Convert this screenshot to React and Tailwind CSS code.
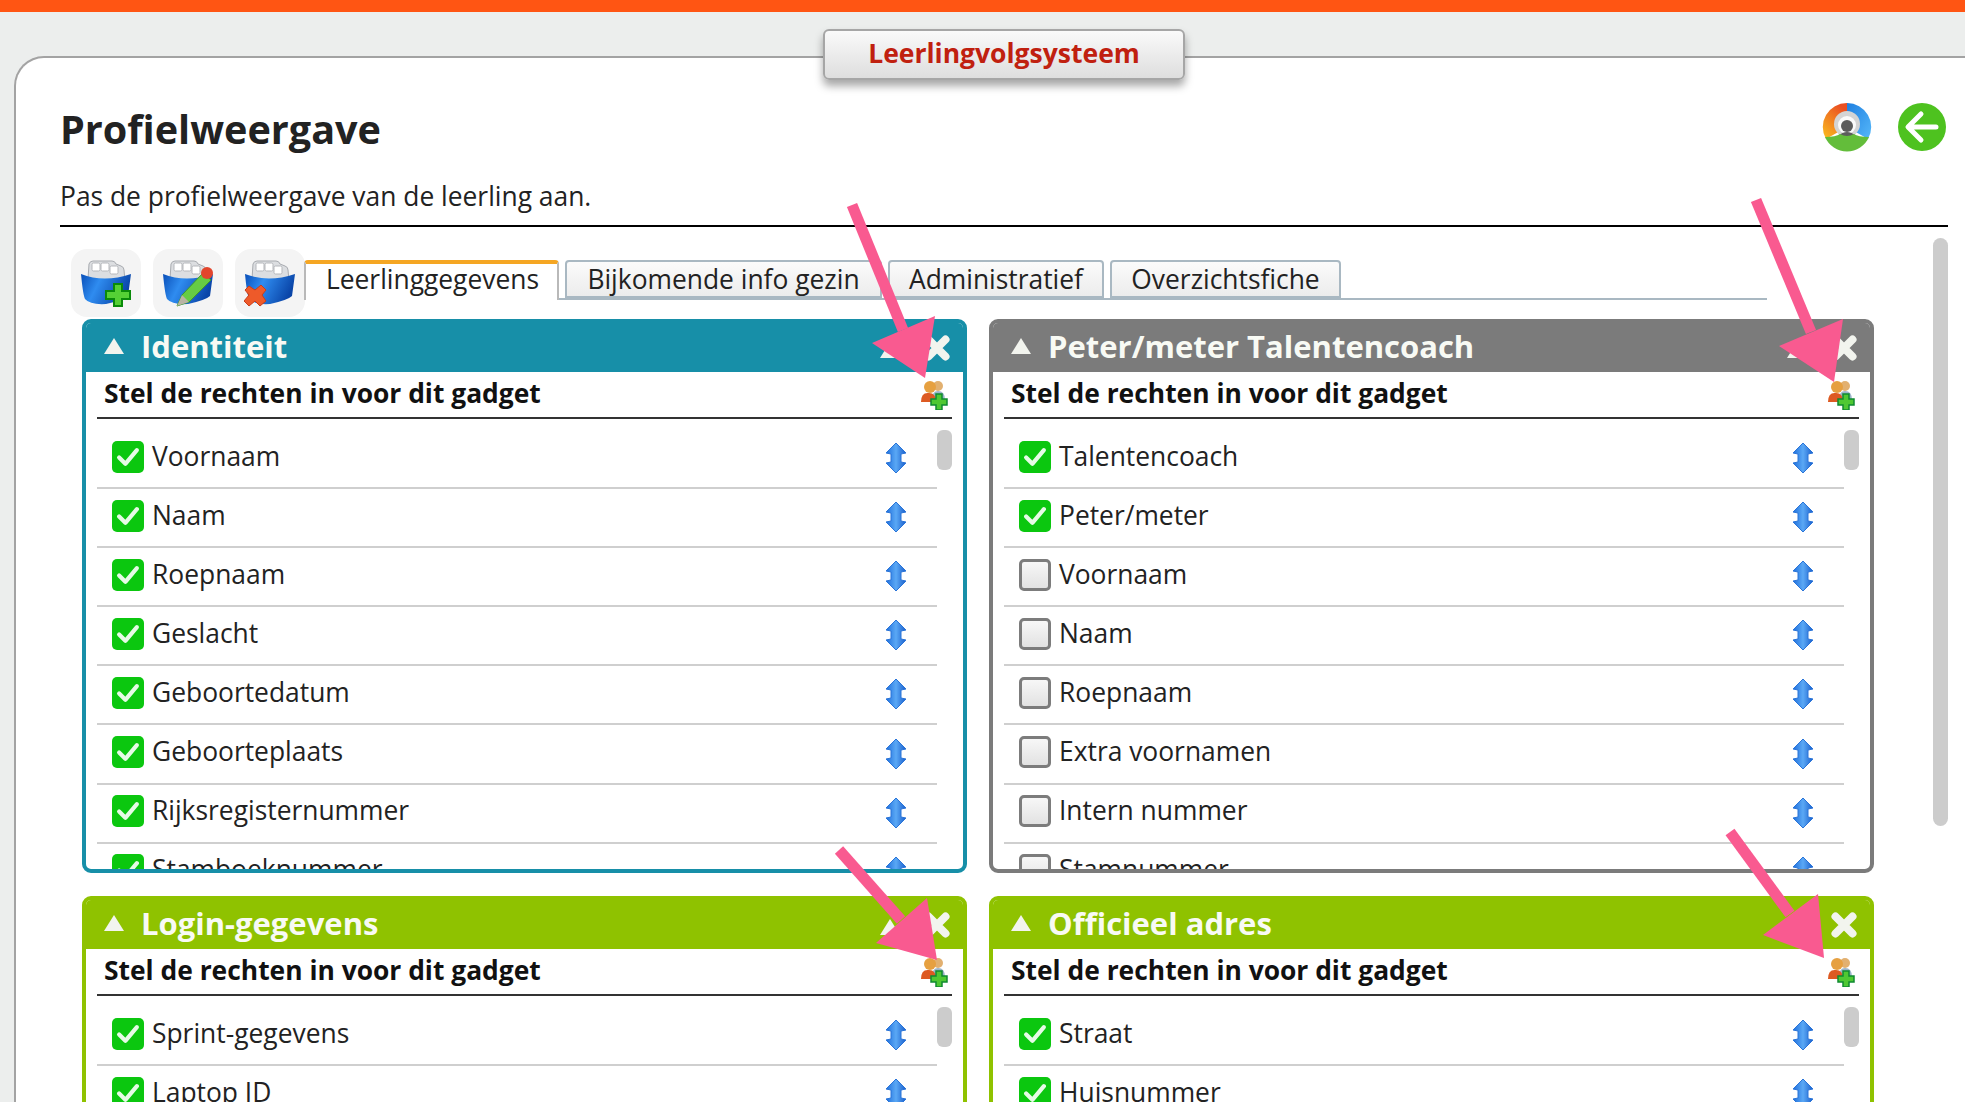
import React from "react";

const panels = [
  {
    title: "Identiteit",
    head: "bg-[#178fa8]",
    border: "border-[#178fa8]",
    rows: [
      ["Voornaam", true],
      ["Naam", true],
      ["Roepnaam", true],
      ["Geslacht", true],
      ["Geboortedatum", true],
      ["Geboorteplaats", true],
      ["Rijksregisternummer", true],
      ["Stamboeknummer", true],
    ],
  },
  {
    title: "Peter/meter Talentencoach",
    head: "bg-[#7b7b7b]",
    border: "border-[#7b7b7b]",
    rows: [
      ["Talentencoach", true],
      ["Peter/meter", true],
      ["Voornaam", false],
      ["Naam", false],
      ["Roepnaam", false],
      ["Extra voornamen", false],
      ["Intern nummer", false],
      ["Stamnummer", false],
    ],
  },
  {
    title: "Login-gegevens",
    head: "bg-[#8fc200]",
    border: "border-[#8fc200]",
    rows: [
      ["Sprint-gegevens", true],
      ["Laptop ID", true],
    ],
  },
  {
    title: "Officieel adres",
    head: "bg-[#8fc200]",
    border: "border-[#8fc200]",
    rows: [
      ["Straat", true],
      ["Huisnummer", true],
    ],
  },
];

function BinIcon({ kind }) {
  return (
    <svg width="52" height="48" viewBox="0 0 52 48">
      <defs>
        <linearGradient id="binBlue" x1="0" y1="0" x2="1" y2="0.3">
          <stop offset="0" stopColor="#0a4fb8" />
          <stop offset="0.4" stopColor="#2f8cf0" />
          <stop offset="1" stopColor="#0a45a8" />
        </linearGradient>
      </defs>
      <path d="M8 20 L9 5 Q10 2 13 2 L32 2 Q35 2 36 5 L41 7 Q44 8 44 11 L45 22 Z" fill="#dcdee1" stroke="#a8abb0" strokeWidth="1" />
      <rect x="12" y="4" width="8" height="8" rx="1.5" fill="#fff" stroke="#b5b7bb" />
      <rect x="21" y="4" width="8" height="8" rx="1.5" fill="#fff" stroke="#b5b7bb" />
      <rect x="30" y="7" width="8" height="8" rx="1.5" fill="#fff" stroke="#b5b7bb" />
      <path d="M1 15 Q24 24 51 15 L48 37 Q44 41 26 45 Q10 46 5 40 Q3 36 1 15 Z" fill="url(#binBlue)" />
      {kind === "add" && (
        <path d="M34 25 h8 v7 h8 v8 h-8 v7 h-8 v-7 h-8 v-8 h8 Z" fill="#55d035" stroke="#0a8a0a" strokeWidth="2" />
      )}
      {kind === "edit" && (
        <>
          <path d="M15 47 L20 36 L41 14 L49 21 L27 43 Z" fill="#66cc44" stroke="#3f9a2a" strokeWidth="1" />
          <path d="M15 47 L20 36 L27 43 Z" fill="#b9b4a4" />
          <circle cx="45" cy="14" r="6" fill="#e2452c" />
        </>
      )}
      {kind === "del" && (
        <path d="M5 27 L11 31 L17 26 L22 31 L18 36 L22 42 L16 47 L11 42 L5 47 L0 42 L5 36 L1 31 Z" fill="#ee5a2a" stroke="#c93d18" strokeWidth="1" />
      )}
    </svg>
  );
}

function ProfileIcon() {
  return (
    <svg width="50" height="50" viewBox="0 0 50 50">
      <defs>
        <linearGradient id="ringLeft" x1="0" y1="1" x2="0.6" y2="0">
          <stop offset="0" stopColor="#fbc01e" />
          <stop offset="1" stopColor="#ea4f22" />
        </linearGradient>
        <linearGradient id="ringRight" x1="0" y1="0" x2="1" y2="1">
          <stop offset="0" stopColor="#1f7fe0" />
          <stop offset="1" stopColor="#56b8fa" />
        </linearGradient>
      </defs>
      <path d="M25 25 L25 1 A24 24 0 0 0 4 37 Z" fill="url(#ringLeft)" />
      <path d="M25 25 L25 1 A24 24 0 0 1 46 37 Z" fill="url(#ringRight)" />
      <circle cx="25" cy="22" r="13" fill="#d4d4d4" />
      <circle cx="25" cy="23" r="9" fill="#fafafa" />
      <circle cx="25" cy="24" r="6" fill="#5c5c5c" />
      <path d="M16 34 Q25 26 34 34 Z" fill="#5c5c5c" />
      <path d="M3 35 Q14 35 18 32 Q25 36 32 32 Q36 35 47 35 A24 24 0 0 1 3 35 Z" fill="#63bd3a" />
    </svg>
  );
}

function BackIcon() {
  return (
    <svg width="48" height="48" viewBox="0 0 48 48">
      <circle cx="24" cy="24" r="24" fill="#4ec21f" />
      <path d="M38 24 H12 M23 11 L10 24 L23 37" fill="none" stroke="#fff" strokeWidth="5" strokeLinecap="round" strokeLinejoin="round" />
    </svg>
  );
}

function SortIcon() {
  return (
    <svg width="22" height="30" viewBox="0 0 22 30" className="shrink-0 mt-[3px]">
      <defs>
        <linearGradient id="sortBlue" x1="0" y1="0" x2="1" y2="0">
          <stop offset="0" stopColor="#1f6fdc" />
          <stop offset="0.5" stopColor="#5aa8f5" />
          <stop offset="1" stopColor="#1a5fcc" />
        </linearGradient>
      </defs>
      <path d="M11 0 L21 10 L16 11 L16 19 L21 20 L11 30 L1 20 L6 19 L6 11 L1 10 Z" fill="url(#sortBlue)" strokeLinejoin="round" stroke="#2a74d8" strokeWidth="1" />
    </svg>
  );
}

function UsersAddIcon() {
  return (
    <svg width="28" height="30" viewBox="0 0 28 30">
      <circle cx="18" cy="6" r="5" fill="#e2b070" />
      <path d="M12 20 Q12 11 18 11 Q25 11 25 20 Z" fill="#9ab4c8" />
      <circle cx="10" cy="7" r="6" fill="#e6a040" />
      <path d="M1 22 Q1 12 9 13 Q16 13 16 22 Z" fill="#dd5a22" />
      <path d="M16 14 h6 v5 h5 v6 h-5 v5 h-6 v-5 h-5 v-6 h5 Z" fill="#4fc832" stroke="#0f8a30" strokeWidth="1.5" />
    </svg>
  );
}

function Triangle() {
  return (
    <svg width="20" height="16" viewBox="0 0 20 16" className="shrink-0">
      <path d="M10 0 L20 16 L0 16 Z" fill="#f2f4ee" />
    </svg>
  );
}

function CloseIcon() {
  return (
    <svg width="26" height="26" viewBox="0 0 26 26" className="shrink-0">
      <path d="M4.5 4.5 L21.5 21.5 M21.5 4.5 L4.5 21.5" stroke="#f2f4ee" strokeWidth="8" strokeLinecap="round" />
    </svg>
  );
}

function Checkbox({ checked }) {
  if (!checked) {
    return (
      <div className="w-[32px] h-[32px] shrink-0 rounded-[5px] border-[3px] border-[#7c7c7c] bg-gradient-to-b from-[#f7f7f7] to-[#e2e2e2]" />
    );
  }
  return (
    <div className="w-[32px] h-[32px] shrink-0 rounded-[5px] bg-[#0bc70f] flex items-center justify-center">
      <svg width="24" height="22" viewBox="0 0 23 21">
        <path d="M3 11 L9 17 L20 4" fill="none" stroke="#e6fbe6" strokeWidth="4" strokeLinecap="round" strokeLinejoin="round" />
      </svg>
    </div>
  );
}

function Panel({ title, head, border, rows }) {
  return (
    <div className={"h-[554px] rounded-[9px] border-4 bg-white flex flex-col overflow-hidden " + border}>
      <div className={"h-[49px] shrink-0 flex items-center pl-[18px] pr-[13px] " + head}>
        <div className="mt-[-4px]">
          <Triangle />
        </div>
        <span className="ml-[17px] mt-[-3px] text-[31px] leading-none font-bold text-[#f8faf4]">{title}</span>
        <div className="ml-auto mr-[24px] mt-[5px]">
          <Triangle />
        </div>
        <CloseIcon />
      </div>
      <div className="h-[47px] shrink-0 mx-[11px] pl-[7px] pr-[4px] border-b-2 border-[#333] flex items-center justify-between">
        <span className="mt-[-2px] text-[26.4px] font-bold text-[#111]">Stel de rechten in voor dit gadget</span>
        <UsersAddIcon />
      </div>
      <div className="flex-1 min-h-0 flex mx-[11px] pt-[11px]">
        <div className="flex-1 min-w-0 overflow-hidden">
          {rows.map(([label, checked]) => (
            <div key={label} className="h-[59.1px] pl-[15px] pr-[30px] pb-[4px] border-b-2 border-[#cfcfcf] flex items-center">
              <Checkbox checked={checked} />
              <span className="ml-[8px] text-[26.4px] text-[#222]">{label}</span>
              <div className="ml-auto">
                <SortIcon />
              </div>
            </div>
          ))}
        </div>
        <div className="w-[15px] h-[40px] shrink-0 rounded-md bg-[#cccccc]" />
      </div>
    </div>
  );
}

function Tab({ label, active, className }) {
  return (
    <div
      className={
        "flex items-center justify-center text-[26.4px] text-[#222] rounded-t-[4px] " +
        (active
          ? "h-[40px] -mb-[2px] pb-[4px] pl-[2px] bg-white border-t-[4px] border-t-[#f5a623] border-x-2 border-x-[#b9b9b9] "
          : "h-[38px] pt-[2px] bg-gradient-to-b from-[#fbfbfb] to-[#ececec] border-2 border-[#a9b8c2] ") +
        className
      }
    >
      {label}
    </div>
  );
}

export default function App() {
  return (
    <div className="relative h-[1102px] overflow-hidden bg-[#eceeed] font-['Open_Sans',sans-serif]">
      <div className="h-3 bg-[#ff5513]" />

      <div className="mt-[44px] ml-[14px] h-[1100px] rounded-tl-[30px] border-t-2 border-l-2 border-[#a3a3a3] bg-white pl-[44px] pr-[17px] pt-[43px]">
        <div className="flex items-center justify-between pr-[2px] h-[56px]">
          <h1 className="mt-[1px] text-[39.6px] font-bold text-[#222]">Profielweergave</h1>
          <div className="flex items-center gap-[26px] mt-[-4px]">
            <ProfileIcon />
            <BackIcon />
          </div>
        </div>
        <p className="mt-[21px] h-[47px] text-[26.4px] leading-[36px] text-[#222]">Pas de profielweergave van de leerling aan.</p>
        <div className="border-t-2 border-black" />

        <div className="flex">
          <div className="flex-1 min-w-0 pt-[22px]">
            <div className="flex items-start ml-[11px]">
              <div className="flex gap-3">
                {["add", "edit", "del"].map((k) => (
                  <div key={k} className="w-[70px] h-[68px] rounded-2xl bg-[#f4f4f4] flex items-center justify-center">
                    <BinIcon kind={k} />
                  </div>
                ))}
              </div>
              <div className="ml-[-1px] mt-[11px] w-[1463px] flex gap-[6px] border-b-2 border-[#a9b8c2]">
                <Tab label="Leerlinggegevens" active className="w-[255px]" />
                <Tab label="Bijkomende info gezin" className="w-[317px]" />
                <Tab label="Administratief" className="w-[216px]" />
                <Tab label="Overzichtsfiche" className="w-[231px]" />
              </div>
            </div>
            <div className="mt-[2px] ml-[22px] grid grid-cols-[885px_885px] gap-x-[22px] gap-y-[23px]">
              {panels.map((p) => (
                <Panel key={p.title} {...p} />
              ))}
            </div>
          </div>
          <div className="w-[15px] h-[588px] mt-[11px] rounded-lg bg-[#cccccc]" />
        </div>
      </div>

      {/* badge over the card edge */}
      <div className="absolute left-[823px] top-[29px] w-[362px] h-[51px] rounded-md border-2 border-[#a6a6a6] bg-gradient-to-b from-[#fafafa] to-[#dedede] shadow-[0_6px_8px_rgba(0,0,0,0.35)] flex items-center justify-center text-[26.5px] font-bold text-[#c0200f]">
        <span className="mt-[-2px]">Leerlingvolgsysteem</span>
      </div>

      {/* pink annotation arrows */}
      <svg className="absolute left-0 top-0 pointer-events-none" width="1965" height="1102">
        <g fill="#f95a90" stroke="#f95a90">
          <line x1="852" y1="205" x2="903" y2="330" strokeWidth="11" />
          <polygon points="935,316 872,343 925,378" strokeWidth="0" />
          <line x1="1756" y1="200" x2="1811" y2="332" strokeWidth="11" />
          <polygon points="1843,319 1779,346 1834,382" strokeWidth="0" />
          <line x1="839" y1="850" x2="901" y2="920" strokeWidth="11" />
          <polygon points="927,898 876,943 937,960" strokeWidth="0" />
          <line x1="1730" y1="832" x2="1790" y2="914" strokeWidth="11" />
          <polygon points="1818,894 1763,935 1824,958" strokeWidth="0" />
        </g>
      </svg>
    </div>
  );
}
